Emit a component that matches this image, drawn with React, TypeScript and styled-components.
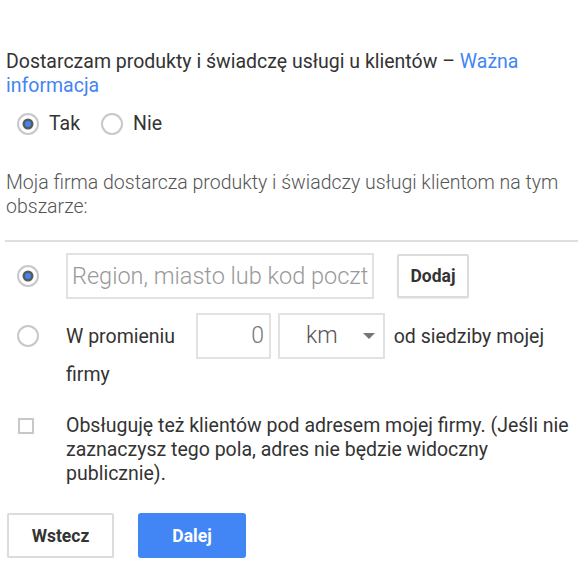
import { FC } from 'react';
import styled, { createGlobalStyle } from 'styled-components';

const Global = createGlobalStyle`
  html, body {
    margin: 0;
    padding: 0;
    background: #fff;
    font-family: Roboto, "Liberation Sans", Arial, sans-serif;
  }
`;

const Radio: FC<{ checked?: boolean }> = ({ checked }) => (
  <RadioIcon width="24" height="24" viewBox="0 0 24 24">
    <circle cx="12" cy="12" r="10" fill="#fff" stroke="#c8c8c8" strokeWidth="2" />
    {checked && (
      <>
        <circle cx="12" cy="12" r="5.5" fill="#5a5a5a" />
        <circle cx="12" cy="12" r="3" fill="#4285f4" />
      </>
    )}
  </RadioIcon>
);

const App: FC = () => {
  return (
    <Page>
      <Global />
      <Lead>
        Dostarczam produkty i świadczę usługi u klientów – <Link href="#">Ważna informacja</Link>
      </Lead>

      <Choices>
        <Choice>
          <Radio checked />
          <span>Tak</span>
        </Choice>
        <Choice>
          <Radio />
          <span>Nie</span>
        </Choice>
      </Choices>

      <Note>Moja firma dostarcza produkty i świadczy usługi klientom na tym obszarze:</Note>

      <Divider />

      <OptionRow>
        <Mark>
          <Radio checked />
        </Mark>
        <Body>
          <RegionInput placeholder="Region, miasto lub kod pocztowy" />
          <GhostButton>Dodaj</GhostButton>
        </Body>
      </OptionRow>

      <RadiusRow>
        <Mark $offset={11}>
          <Radio />
        </Mark>
        <RadiusText>
          W promieniu <NumberBox>0</NumberBox>
          <SelectBox>
            km
            <Caret width="12" height="6" viewBox="0 0 12 6">
              <path d="M0 0h12L6 6z" fill="#757575" />
            </Caret>
          </SelectBox>
          {' '}od siedziby mojej firmy
        </RadiusText>
      </RadiusRow>

      <CheckRow>
        <Mark $offset={4}>
          <CheckBox />
        </Mark>
        <CheckText>
          Obsługuję też klientów pod adresem mojej firmy. (Jeśli nie zaznaczysz tego pola, adres nie
          będzie widoczny publicznie).
        </CheckText>
      </CheckRow>

      <Actions>
        <BackButton>Wstecz</BackButton>
        <NextButton>Dalej</NextButton>
      </Actions>
    </Page>
  );
};

// Styles
const Page = styled.div`
  width: 585px;
  box-sizing: border-box;
  padding: 50px 7px 0 6px;
  color: #333;
`;

const Lead = styled.p`
  margin: 0;
  font-size: 19.5px;
  line-height: 24px;
  color: #333;
`;

const Link = styled.a`
  color: #4285f4;
  text-decoration: none;
`;

const Choices = styled.div`
  display: flex;
  gap: 20px;
  margin-top: 14px;
  padding-left: 10px;
`;

const Choice = styled.label`
  display: flex;
  align-items: center;
  gap: 9px;
  font-size: 19.5px;
  line-height: 24px;
  color: #333;
`;

const RadioIcon = styled.svg`
  display: block;
  flex: none;
`;

const Note = styled.p`
  margin: 35px 0 0;
  font-size: 19.5px;
  font-weight: 300;
  line-height: 24px;
  color: #555;
`;

const Divider = styled.hr`
  margin: 21px 0 0 -1px;
  border: 0;
  border-top: 2px solid #dedede;
`;

const OptionRow = styled.div`
  display: flex;
  align-items: center;
  margin-top: 11px;
`;

const Mark = styled.div<{ $offset?: number }>`
  width: 60px;
  flex: none;
  display: flex;
  padding-left: 10px;
  padding-top: ${(p) => p.$offset ?? 0}px;
  box-sizing: border-box;
`;

const Body = styled.div`
  display: flex;
  align-items: center;
  gap: 23px;
`;

const RegionInput = styled.input`
  width: 308px;
  height: 46px;
  box-sizing: border-box;
  border: 2px solid #e2e2e2;
  padding: 0 4px 0 4px;
  font-family: inherit;
  font-size: 23.5px;
  font-weight: 300;
  color: #333;
  outline: none;
  &::placeholder {
    color: #999;
  }
`;

const GhostButton = styled.button`
  width: 72px;
  height: 44px;
  border: 2px solid #dcdcdc;
  border-radius: 2px;
  background: #fff;
  box-shadow: 0 1px 1px rgba(0, 0, 0, 0.08);
  font-family: inherit;
  font-size: 17.5px;
  font-weight: 700;
  color: #333;
`;

const RadiusRow = styled.div`
  display: flex;
  align-items: flex-start;
  margin-top: 14px;
`;

const RadiusText = styled.div`
  font-size: 19.5px;
  line-height: 24px;
  color: #333;
  & > * {
    vertical-align: middle;
  }
`;

const Field = styled.span`
  display: inline-flex;
  align-items: center;
  height: 46px;
  box-sizing: border-box;
  margin-bottom: 4px;
  border: 2px solid #e2e2e2;
  font-size: 23px;
  font-weight: 300;
`;

const NumberBox = styled(Field)`
  justify-content: flex-end;
  width: 75px;
  margin-left: 16px;
  padding-right: 5px;
  color: #777;
`;

const SelectBox = styled(Field)`
  justify-content: space-between;
  width: 107px;
  margin-left: 7px;
  margin-right: 4px;
  padding: 0 8px 0 26px;
  color: #555;
`;

const Caret = styled.svg`
  display: block;
`;

const CheckRow = styled.div`
  display: flex;
  align-items: flex-start;
  margin-top: 27px;
`;

const CheckBox = styled.span`
  display: block;
  width: 16px;
  height: 16px;
  box-sizing: border-box;
  margin-left: 2px;
  border: 2px solid #c8c8c8;
`;

const CheckText = styled.div`
  font-size: 19.5px;
  line-height: 24px;
  color: #333;
  max-width: 512px;
`;

const Actions = styled.div`
  display: flex;
  gap: 24px;
  margin-top: 27px;
  padding-left: 1px;
`;

const BackButton = styled.button`
  width: 107px;
  height: 45px;
  border: 2px solid #dcdcdc;
  border-radius: 2px;
  background: #fff;
  box-shadow: 0 1px 1px rgba(0, 0, 0, 0.08);
  font-family: inherit;
  font-size: 17.5px;
  font-weight: 700;
  color: #333;
`;

const NextButton = styled.button`
  width: 108px;
  height: 45px;
  border: 0;
  border-radius: 3px;
  background: #4285f4;
  font-family: inherit;
  font-size: 17.5px;
  font-weight: 700;
  color: #fff;
`;

export default App;
